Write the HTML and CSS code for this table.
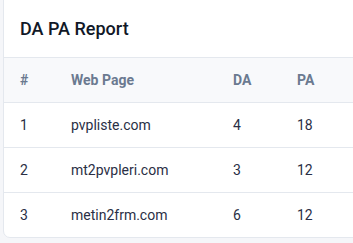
FILE: index.html
```html
<!DOCTYPE html>
<html>
<head>
<meta charset="utf-8">
<link rel="stylesheet" href="styles.css">
</head>
<body>
<div class="card">
  <div class="card-header">DA PA Report</div>
  <table class="report">
    <colgroup>
      <col class="c-num"><col class="c-page"><col class="c-da"><col class="c-pa">
    </colgroup>
    <thead>
      <tr><th>#</th><th>Web Page</th><th>DA</th><th>PA</th></tr>
    </thead>
    <tbody>
      <tr><td>1</td><td>pvpliste.com</td><td>4</td><td>18</td></tr>
      <tr><td>2</td><td>mt2pvpleri.com</td><td>3</td><td>12</td></tr>
      <tr><td>3</td><td>metin2frm.com</td><td>6</td><td>12</td></tr>
    </tbody>
  </table>
</div>
</body>
</html>
```
FILE: styles.css
```css
html, body {
  margin: 0;
  padding: 0;
  background: #f5f6f9;
  font-family: Roboto, "Liberation Sans", sans-serif;
  overflow: hidden;
}
body {
  padding-left: 3px;
}
.card {
  width: 360px;
  margin-top: -8px;
  background: #fff;
  border: 1px solid #e4e8ee;
  border-radius: 7px;
  overflow: hidden;
}
.card-header {
  padding: 22px 16px 15px;
  font-size: 18px;
  line-height: 27px;
  font-weight: 500;
  color: #111827;
}
.report {
  width: 100%;
  border-collapse: collapse;
  table-layout: fixed;
}
.c-num { width: 51px; }
.c-page { width: 162px; }
.c-da { width: 64px; }
.report th, .report td {
  text-align: left;
  padding: 0 16px;
  height: 44px;
  border-top: 1px solid #e4e8ee;
}
.report th {
  background: #f8f9fb;
  font-size: 14px;
  font-weight: 700;
  color: #6b7a90;
}
.report td {
  font-size: 14px;
  color: #2a2f45;
}
```
